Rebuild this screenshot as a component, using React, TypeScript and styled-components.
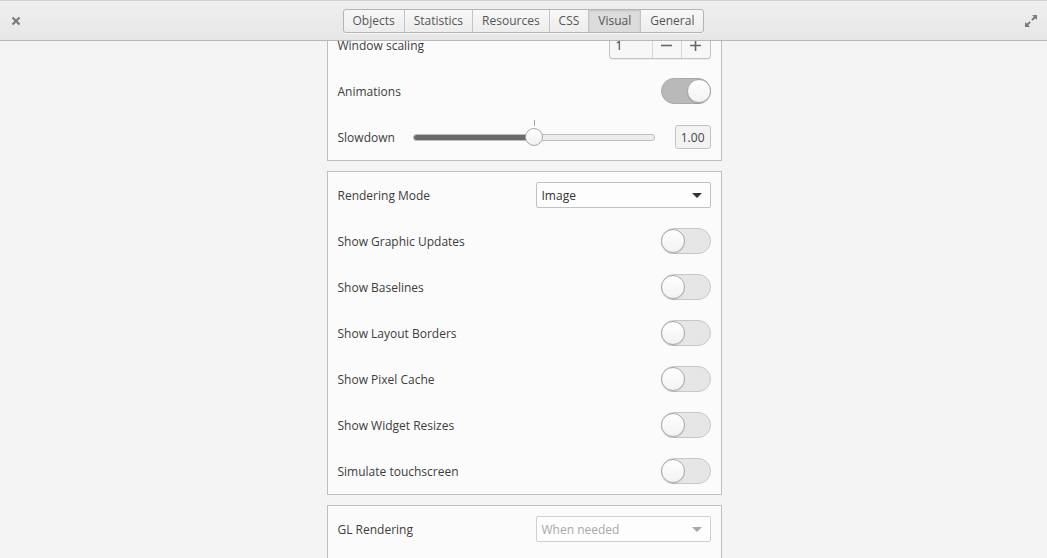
import React from 'react'
import styled, { createGlobalStyle } from 'styled-components'

const Global = createGlobalStyle`
  html, body {
    margin: 0;
    padding: 0;
    height: 100%;
    overflow: hidden;
  }
  body {
    background: #f4f4f4;
    font-family: 'Open Sans', 'Noto Sans', sans-serif;
    font-size: 12px;
    color: #3d3d3d;
  }
`

const Window = styled.div`
  width: 1047px;
  height: 558px;
  display: flex;
  flex-direction: column;
`

const HeaderBar = styled.header`
  height: 41px;
  flex: none;
  display: flex;
  align-items: center;
  justify-content: space-between;
  padding: 0 8px;
  box-sizing: border-box;
  background: linear-gradient(#efefef, #e7e7e7);
  border-top: 1px solid #d2d2d2;
  border-bottom: 1px solid #b8b8b8;
  position: relative;
  z-index: 2;
`

const IconButton = styled.div`
  width: 16px;
  height: 16px;
  display: flex;
  align-items: center;
  justify-content: center;
  color: #7a7a7a;
`

const Tabs = styled.div`
  display: flex;
  border: 1px solid #b4b4b4;
  border-radius: 3px;
  overflow: hidden;
  background: linear-gradient(#f8f8f8, #ededed);
  box-shadow: 0 1px 0 rgba(255, 255, 255, 0.7);
`

const Tab = styled.div<{ $active?: boolean }>`
  height: 22px;
  padding: 0 9px;
  display: flex;
  align-items: center;
  color: #555;
  font-size: 12px;
  border-left: 1px solid #c4c4c4;
  background: ${p => (p.$active ? '#dcdcdc' : 'transparent')};
  box-shadow: ${p => (p.$active ? 'inset 0 1px 2px rgba(0,0,0,0.12)' : 'none')};
  &:first-child {
    border-left: none;
  }
`

const Scroller = styled.div`
  flex: 1;
  overflow: hidden;
  display: flex;
  justify-content: center;
`

const Column = styled.div`
  width: 395px;
  margin-top: -20px;
  display: flex;
  flex-direction: column;
  gap: 10px;
  margin-left: 1px;
`

const Frame = styled.section`
  background: #fbfbfb;
  border: 1px solid #bfbfbf;
  display: flex;
  flex-direction: column;
`

const Row = styled.div`
  height: 46px;
  padding: 0 10px;
  display: flex;
  align-items: center;
  justify-content: space-between;
  gap: 12px;
`

const Label = styled.span`
  color: #3d3d3d;
  white-space: nowrap;
`

const SpinBox = styled.div`
  width: 100px;
  height: 26px;
  display: flex;
  border: 1px solid #c2c2c2;
  border-radius: 3px;
  background: #f7f7f7;
  box-shadow: 0 1px 0 rgba(0, 0, 0, 0.06);
`

const SpinEntry = styled.div`
  flex: 1;
  padding: 0 6px;
  display: flex;
  align-items: center;
  color: #333;
`

const SpinButton = styled.div`
  width: 28px;
  display: flex;
  align-items: center;
  justify-content: center;
  border-left: 1px solid #d6d6d6;
  color: #666;
`

const Switch = styled.div<{ $on?: boolean }>`
  width: 48px;
  height: 24px;
  border-radius: 13px;
  border: 1px solid ${p => (p.$on ? '#a8a8a8' : '#c8c8c8')};
  background: ${p => (p.$on ? '#b9b9b9' : '#e6e6e6')};
  display: flex;
  justify-content: ${p => (p.$on ? 'flex-end' : 'flex-start')};
  align-items: center;
  flex: none;
`

const Knob = styled.div`
  width: 24px;
  height: 24px;
  margin: 0 -1px;
  border-radius: 50%;
  background: linear-gradient(#ffffff, #f2f2f2);
  border: 1px solid #a9a9a9;
  box-sizing: border-box;
  box-shadow: 0 1px 1px rgba(0, 0, 0, 0.12);
`

const SliderWrap = styled.div`
  flex: 1;
  display: flex;
  align-items: center;
  gap: 20px;
  margin-left: 6px;
`

const Track = styled.div`
  flex: 1;
  height: 5px;
  border-radius: 3px;
  border: 1px solid #bdbdbd;
  background: #ededed;
  position: relative;
`

const Fill = styled.div`
  height: 100%;
  border-radius: 3px;
  background: #6a6a6a;
`

const Thumb = styled.div`
  position: absolute;
  top: 50%;
  width: 18px;
  height: 18px;
  margin: -9px 0 0 -9px;
  border-radius: 50%;
  background: linear-gradient(#ffffff, #f0f0f0);
  border: 1px solid #a9a9a9;
  box-sizing: border-box;
`

const Tick = styled.div`
  position: absolute;
  top: -15px;
  width: 1px;
  height: 6px;
  background: #a0a0a0;
`

const ValueBox = styled.div`
  height: 22px;
  padding: 0 5px;
  display: flex;
  align-items: center;
  border: 1px solid #c2c2c2;
  border-radius: 3px;
  background: #f3f3f3;
  color: #444;
`

const Combo = styled.div<{ $disabled?: boolean }>`
  width: 175px;
  height: 26px;
  box-sizing: border-box;
  padding: 0 8px 0 5px;
  display: flex;
  align-items: center;
  justify-content: space-between;
  border: 1px solid ${p => (p.$disabled ? '#d0d0d0' : '#c2c2c2')};
  border-radius: 2px;
  background: #fdfdfd;
  color: ${p => (p.$disabled ? '#a8a8a8' : '#333')};
`

const Arrow = styled.div<{ $disabled?: boolean }>`
  width: 0;
  height: 0;
  border-left: 5px solid transparent;
  border-right: 5px solid transparent;
  border-top: 5px solid ${p => (p.$disabled ? '#a8a8a8' : '#333')};
`

const toggles = [
  'Show Graphic Updates',
  'Show Baselines',
  'Show Layout Borders',
  'Show Pixel Cache',
  'Show Widget Resizes',
  'Simulate touchscreen',
]

const Toggle = ({ on }: { on?: boolean }) => (
  <Switch $on={on}>
    <Knob />
  </Switch>
)

export default function App() {
  const slowdown = 0.5
  return (
    <Window>
      <Global />
      <HeaderBar>
        <IconButton>
          <svg width="10" height="10" viewBox="0 0 10 10">
            <path d="M1.5 1.5 L8.5 8.5 M8.5 1.5 L1.5 8.5" stroke="#7a7a7a" strokeWidth="2.2" />
          </svg>
        </IconButton>
        <Tabs>
          <Tab>Objects</Tab>
          <Tab>Statistics</Tab>
          <Tab>Resources</Tab>
          <Tab>CSS</Tab>
          <Tab $active>Visual</Tab>
          <Tab>General</Tab>
        </Tabs>
        <IconButton>
          <svg width="14" height="14" viewBox="0 0 14 14" fill="#7a7a7a">
            <path d="M8 1 H13 V6 L11.2 4.2 L8.6 6.8 L7.2 5.4 L9.8 2.8 Z" />
            <path d="M6 13 H1 V8 L2.8 9.8 L5.4 7.2 L6.8 8.6 L4.2 11.2 Z" />
          </svg>
        </IconButton>
      </HeaderBar>
      <Scroller>
        <Column>
          <Frame>
            <Row>
              <Label>Window scaling</Label>
              <SpinBox>
                <SpinEntry>1</SpinEntry>
                <SpinButton>
                  <svg width="11" height="11" viewBox="0 0 11 11">
                    <path d="M0 5.5 H11" stroke="#666" strokeWidth="1.6" />
                  </svg>
                </SpinButton>
                <SpinButton>
                  <svg width="11" height="11" viewBox="0 0 11 11">
                    <path d="M0 5.5 H11 M5.5 0 V11" stroke="#666" strokeWidth="1.6" />
                  </svg>
                </SpinButton>
              </SpinBox>
            </Row>
            <Row>
              <Label>Animations</Label>
              <Toggle on />
            </Row>
            <Row>
              <Label>Slowdown</Label>
              <SliderWrap>
                <Track>
                  <Fill style={{ width: `${slowdown * 100}%` }} />
                  <Tick style={{ left: `${slowdown * 100}%` }} />
                  <Thumb style={{ left: `${slowdown * 100}%` }} />
                </Track>
                <ValueBox>1.00</ValueBox>
              </SliderWrap>
            </Row>
          </Frame>
          <Frame>
            <Row>
              <Label>Rendering Mode</Label>
              <Combo>
                <span>Image</span>
                <Arrow />
              </Combo>
            </Row>
            {toggles.map(t => (
              <Row key={t}>
                <Label>{t}</Label>
                <Toggle />
              </Row>
            ))}
          </Frame>
          <Frame>
            <Row>
              <Label>GL Rendering</Label>
              <Combo $disabled>
                <span>When needed</span>
                <Arrow $disabled />
              </Combo>
            </Row>
            <Row />
          </Frame>
        </Column>
      </Scroller>
    </Window>
  )
}
